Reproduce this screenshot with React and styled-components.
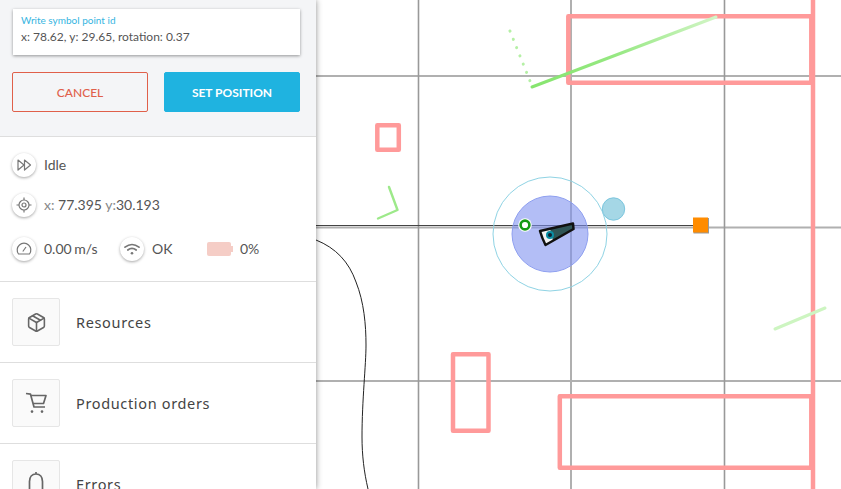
import React from "react";
import styled, { createGlobalStyle } from "styled-components";
import { Package } from "lucide-react";

const GlobalStyle = createGlobalStyle`
  html, body {
    margin: 0;
    padding: 0;
    height: 100%;
    overflow: hidden;
    background: #fff;
    font-family: "Lato", "Liberation Sans", sans-serif;
  }
`;

const Page = styled.div`
  display: flex;
  width: 841px;
  height: 489px;
  overflow: hidden;
`;

const Sidebar = styled.aside`
  position: relative;
  z-index: 1;
  flex: 0 0 316px;
  height: 489px;
  overflow: hidden;
  background: #fff;
  box-shadow: 0 0 6px rgba(0, 0, 0, 0.45);
`;

const FormPanel = styled.section`
  box-sizing: border-box;
  height: 137px;
  padding: 9px 16px 0 12px;
  background: #f4f5f7;
  border-bottom: 1px solid #dedede;
`;

const InputCard = styled.div`
  box-sizing: border-box;
  height: 46px;
  margin: 0 0 17px 1px;
  padding: 5px 8px;
  background: #fff;
  box-shadow: 0 1px 3px rgba(0, 0, 0, 0.4);
`;

const InputLabel = styled.div`
  font-size: 10px;
  line-height: 12px;
  color: #35b5df;
`;

const InputValue = styled.div`
  margin-top: 3px;
  font-size: 12px;
  line-height: 15px;
  color: #555;
`;

const ButtonRow = styled.div`
  display: flex;
  gap: 16px;
`;

const ActionButton = styled.button`
  box-sizing: border-box;
  flex: 1;
  height: 40px;
  padding: 0;
  border-radius: 2px;
  border: 1px solid ${(p) => (p.$primary ? "#1fb3e0" : "#e0604a")};
  background: ${(p) => (p.$primary ? "#1fb3e0" : "transparent")};
  color: ${(p) => (p.$primary ? "#fff" : "#e0604a")};
  font-family: inherit;
  font-size: 12px;
  font-weight: ${(p) => (p.$primary ? 700 : 500)};
  text-transform: uppercase;
`;

const StatusPanel = styled.section`
  box-sizing: border-box;
  height: 145px;
  padding: 16px 12px 0;
  border-bottom: 1px solid #dedede;
  display: flex;
  flex-direction: column;
  gap: 16px;
`;

const StatusRow = styled.div`
  display: flex;
  align-items: center;
  height: 24px;
  margin-top: ${(p) => p.$offset || 0}px;
`;

const StatusItem = styled.div`
  display: flex;
  align-items: center;
  width: ${(p) => p.$width || "auto"};
  font-size: 14px;
  color: #555;
`;

const StatusText = styled.span`
  margin-bottom: 2px;
  word-spacing: ${(p) => (p.$tight ? "-1px" : "0")};
`;

const IconCircle = styled.span`
  display: flex;
  align-items: center;
  justify-content: center;
  width: 24px;
  height: 24px;
  margin-right: 8px;
  border-radius: 50%;
  background: #fff;
  color: #777;
  box-shadow: 0 1px 3px rgba(0, 0, 0, 0.35);
`;

const Muted = styled.span`
  color: #888;
`;

const Battery = styled.span`
  display: flex;
  align-items: center;
  margin-right: 7px;
  &::before {
    content: "";
    width: 24px;
    height: 14px;
    border-radius: 2px;
    background: #f5cdc6;
  }
  &::after {
    content: "";
    width: 2px;
    height: 6px;
    background: #f5cdc6;
  }
`;

const MenuRow = styled.div`
  box-sizing: border-box;
  display: flex;
  align-items: center;
  height: 81px;
  padding: 0 12px;
  border-bottom: 1px solid #dedede;
`;

const MenuIcon = styled.span`
  box-sizing: border-box;
  display: flex;
  align-items: center;
  justify-content: center;
  flex: 0 0 48px;
  height: 48px;
  margin-right: 16px;
  border: 1px solid #e6e6e6;
  border-radius: 2px;
  background: #fafafa;
  color: #666;
`;

const MenuLabel = styled.span`
  font-family: "Noto Sans", sans-serif;
  font-size: 14.5px;
  letter-spacing: 0.65px;
  color: #444;
`;

const MapCanvas = styled.svg`
  display: block;
  flex: 0 0 525px;
  height: 489px;
`;

const ForwardIcon = () => (
  <svg width="16" height="16" viewBox="0 0 16 16" fill="none" stroke="currentColor" strokeWidth="1.2" strokeLinejoin="round">
    <path d="M2 3l6 5-6 5zM8.5 3l6 5-6 5z" />
  </svg>
);

const TargetIcon = () => (
  <svg width="16" height="16" viewBox="0 0 16 16" fill="none" stroke="currentColor" strokeWidth="1.2">
    <circle cx="8" cy="8" r="5" />
    <circle cx="8" cy="8" r="2" />
    <path d="M8 0.5v2.5M8 13v2.5M0.5 8h2.5M13 8h2.5" />
  </svg>
);

const GaugeIcon = () => (
  <svg width="16" height="16" viewBox="0 0 16 16" fill="none" stroke="currentColor" strokeWidth="1.2" strokeLinejoin="round">
    <path d="M2.5 13a6.8 6.8 0 1 1 11 0z" />
    <path d="M6.8 10.5L10 6" />
  </svg>
);

const WifiIcon = () => (
  <svg width="16" height="16" viewBox="0 0 16 16" fill="none" stroke="currentColor" strokeWidth="1.7" strokeLinecap="round">
    <path d="M1 6.2Q8 0.8 15 6.2" />
    <path d="M3.8 9Q8 5.6 12.2 9" />
    <circle cx="8" cy="12.2" r="1.3" fill="currentColor" stroke="none" />
  </svg>
);

const CartIcon = () => (
  <svg width="22" height="22" viewBox="0 0 22 22" fill="none" stroke="currentColor" strokeWidth="1.7" strokeLinejoin="round">
    <path d="M1 1.5L5.5 2.2L9 15H20" />
    <path d="M6 3.5H21L18.5 11.5H8" />
    <circle cx="7" cy="19.6" r="1.3" fill="currentColor" stroke="none" />
    <circle cx="17" cy="19.6" r="1.3" fill="currentColor" stroke="none" />
  </svg>
);

const BellIcon = () => (
  <svg width="22" height="26" viewBox="0 0 22 26" fill="none" stroke="currentColor" strokeWidth="1.7" strokeLinejoin="round">
    <path d="M11 1V3M4.5 21V10.5C4.5 6 7 3 11 3C15 3 17.5 6 17.5 10.5V21" />
  </svg>
);

const App = () => (
  <>
    <GlobalStyle />
    <Page>
      <Sidebar>
        <FormPanel>
          <InputCard>
            <InputLabel>Write symbol point id</InputLabel>
            <InputValue>x: 78.62, y: 29.65, rotation: 0.37</InputValue>
          </InputCard>
          <ButtonRow>
            <ActionButton>Cancel</ActionButton>
            <ActionButton $primary>Set position</ActionButton>
          </ButtonRow>
        </FormPanel>
        <StatusPanel>
          <StatusRow>
            <StatusItem>
              <IconCircle><ForwardIcon /></IconCircle>
              <StatusText>Idle</StatusText>
            </StatusItem>
          </StatusRow>
          <StatusRow>
            <StatusItem>
              <IconCircle><TargetIcon /></IconCircle>
              <StatusText><Muted>x:</Muted> 77.395 <Muted>y:</Muted>30.193</StatusText>
            </StatusItem>
          </StatusRow>
          <StatusRow $offset={4}>
            <StatusItem $width="108px">
              <IconCircle><GaugeIcon /></IconCircle>
              <StatusText $tight>0.00 m/s</StatusText>
            </StatusItem>
            <StatusItem $width="87px">
              <IconCircle><WifiIcon /></IconCircle>
              <StatusText>OK</StatusText>
            </StatusItem>
            <StatusItem>
              <Battery />
              <StatusText>0%</StatusText>
            </StatusItem>
          </StatusRow>
        </StatusPanel>
        <MenuRow>
          <MenuIcon><Package size={21} strokeWidth={1.8} /></MenuIcon>
          <MenuLabel>Resources</MenuLabel>
        </MenuRow>
        <MenuRow>
          <MenuIcon><CartIcon /></MenuIcon>
          <MenuLabel>Production orders</MenuLabel>
        </MenuRow>
        <MenuRow>
          <MenuIcon><BellIcon /></MenuIcon>
          <MenuLabel>Errors</MenuLabel>
        </MenuRow>
      </Sidebar>

      <MapCanvas viewBox="316 0 525 489">
        <defs>
          <linearGradient id="scanFade" gradientUnits="userSpaceOnUse" x1="532" y1="87" x2="716" y2="17">
            <stop offset="0" stopColor="#86e56e" />
            <stop offset="0.45" stopColor="#96e882" />
            <stop offset="1" stopColor="#d2f5c6" />
          </linearGradient>
          <filter id="soft" x="-10%" y="-10%" width="120%" height="120%">
            <feGaussianBlur stdDeviation="0.5" />
          </filter>
        </defs>

        {/* grid */}
        <g stroke="#b0b0b0" strokeWidth="2">
          <path d="M571 0V489" />
          <path d="M316 76H841M316 381H841M316 227.5H841" />
        </g>
        <g stroke="#999" strokeWidth="1.6">
          <path d="M418.5 0V489M724.5 0V489" />
        </g>
        <path d="M316 225.5H694" stroke="#444" strokeWidth="1" />

        {/* walls */}
        <g fill="none" stroke="#ff9a9a" strokeWidth="4.5" strokeLinejoin="round">
          <path d="M813 0V489" />
          <rect x="568.3" y="16.3" width="243" height="66.5" />
          <rect x="377.3" y="125.3" width="21.5" height="24.5" />
          <rect x="453" y="354.2" width="35.5" height="76.5" />
          <rect x="559.8" y="396.2" width="251.5" height="71.5" />
        </g>

        {/* laser scan */}
        <g fill="none" strokeLinecap="round" strokeLinejoin="round" filter="url(#soft)">
          <path d="M532 87L716 17" stroke="url(#scanFade)" strokeWidth="3" />
          <path d="M510 31L530 81" stroke="#b5f0a5" strokeWidth="3" strokeDasharray="0.1 8.8" />
          <path d="M389 187L397.5 210L378 218.5" stroke="#9de98a" strokeWidth="2.4" />
          <path d="M775 329L825 308" stroke="#cdf5c1" strokeWidth="3" />
        </g>

        {/* path */}
        <path d="M316 240C336 248 349 262 356 282C364 302 366 325 366 345C366 365 362 400 362 437C362 455 364 472 368 489" fill="none" stroke="#222" strokeWidth="1" />

        {/* robot */}
        <circle cx="550" cy="234" r="57" fill="none" stroke="#8fd3e4" strokeWidth="1" />
        <circle cx="550" cy="234" r="38" fill="#7c8ff0" fillOpacity="0.58" stroke="#8e9ff0" strokeWidth="1" />
        <circle cx="613.5" cy="209" r="11.2" fill="#a5d7e6" stroke="#7cc6de" strokeWidth="1" />
        <path d="M540 231L573 223.5L573.5 229L545.5 245Q542 238 540 231z" fill="#2f5556" />
        <path d="M540 231L550 228.8L553 240.8L545.5 245Q542 238 540 231z" fill="#f4f4f4" />
        <path d="M540 231L573 223.5L573.5 229L545.5 245Q542 238 540 231z" fill="none" stroke="#111" strokeWidth="2.5" strokeLinejoin="round" />
        <circle cx="550" cy="235" r="3" fill="#123" stroke="#0a8fa5" strokeWidth="2" />
        <circle cx="525" cy="225" r="6.8" fill="#fff" />
        <circle cx="525" cy="225" r="4.4" fill="#fff" stroke="#159a15" strokeWidth="2.6" />
        <rect x="693.5" y="218" width="15.5" height="15.5" fill="#999" />
        <rect x="693" y="217.5" width="15" height="15" fill="#ff8c00" />
      </MapCanvas>
    </Page>
  </>
);

export default App;
